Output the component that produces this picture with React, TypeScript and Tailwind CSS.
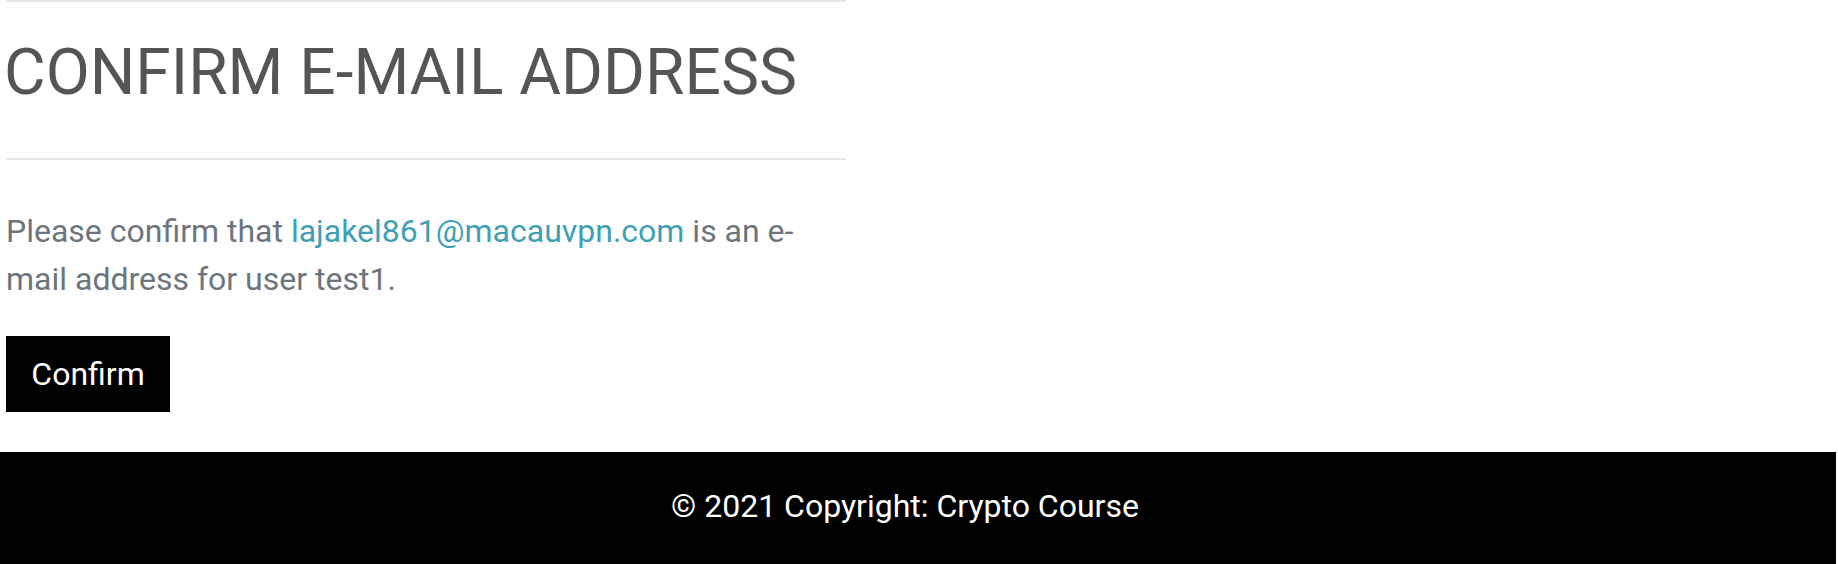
const ConfirmEmail: React.FC = () => {
  return (
    <div className="w-[840px] ml-[6px]">
      <hr className="border-0 h-[2px] bg-[#e6e6e6]" />
      <h1 className="mt-[32px] -ml-[2px] text-[64px] leading-[77px] font-normal text-[#555555]">
        CONFIRM E-MAIL ADDRESS
      </h1>
      <hr className="mt-[47px] border-0 h-[2px] bg-[#e6e6e6]" />
      <p className="mt-[47px] text-[32px] leading-[48px] text-[#6c757d]">
        Please confirm that{' '}
        <a href="#" className="text-[#3f9fb5]">
          lajakel861@macauvpn.com
        </a>{' '}
        is an e-mail address for user test1.
      </p>
      <form className="mt-[33px]">
        <button
          type="submit"
          className="h-[76px] w-[164px] bg-black text-white text-[32px] leading-[38px]"
        >
          Confirm
        </button>
      </form>
    </div>
  );
};

export default function App() {
  return (
    <div className="w-[1836px] min-h-[564px] flex flex-col bg-white font-['Roboto',sans-serif]">
      <main className="flex-1">
        <ConfirmEmail />
      </main>
      <footer className="h-[112px] bg-black text-white text-[32px] flex items-center justify-center pr-[26px] pb-[5px]">
        © 2021 Copyright: Crypto Course
      </footer>
    </div>
  );
}
